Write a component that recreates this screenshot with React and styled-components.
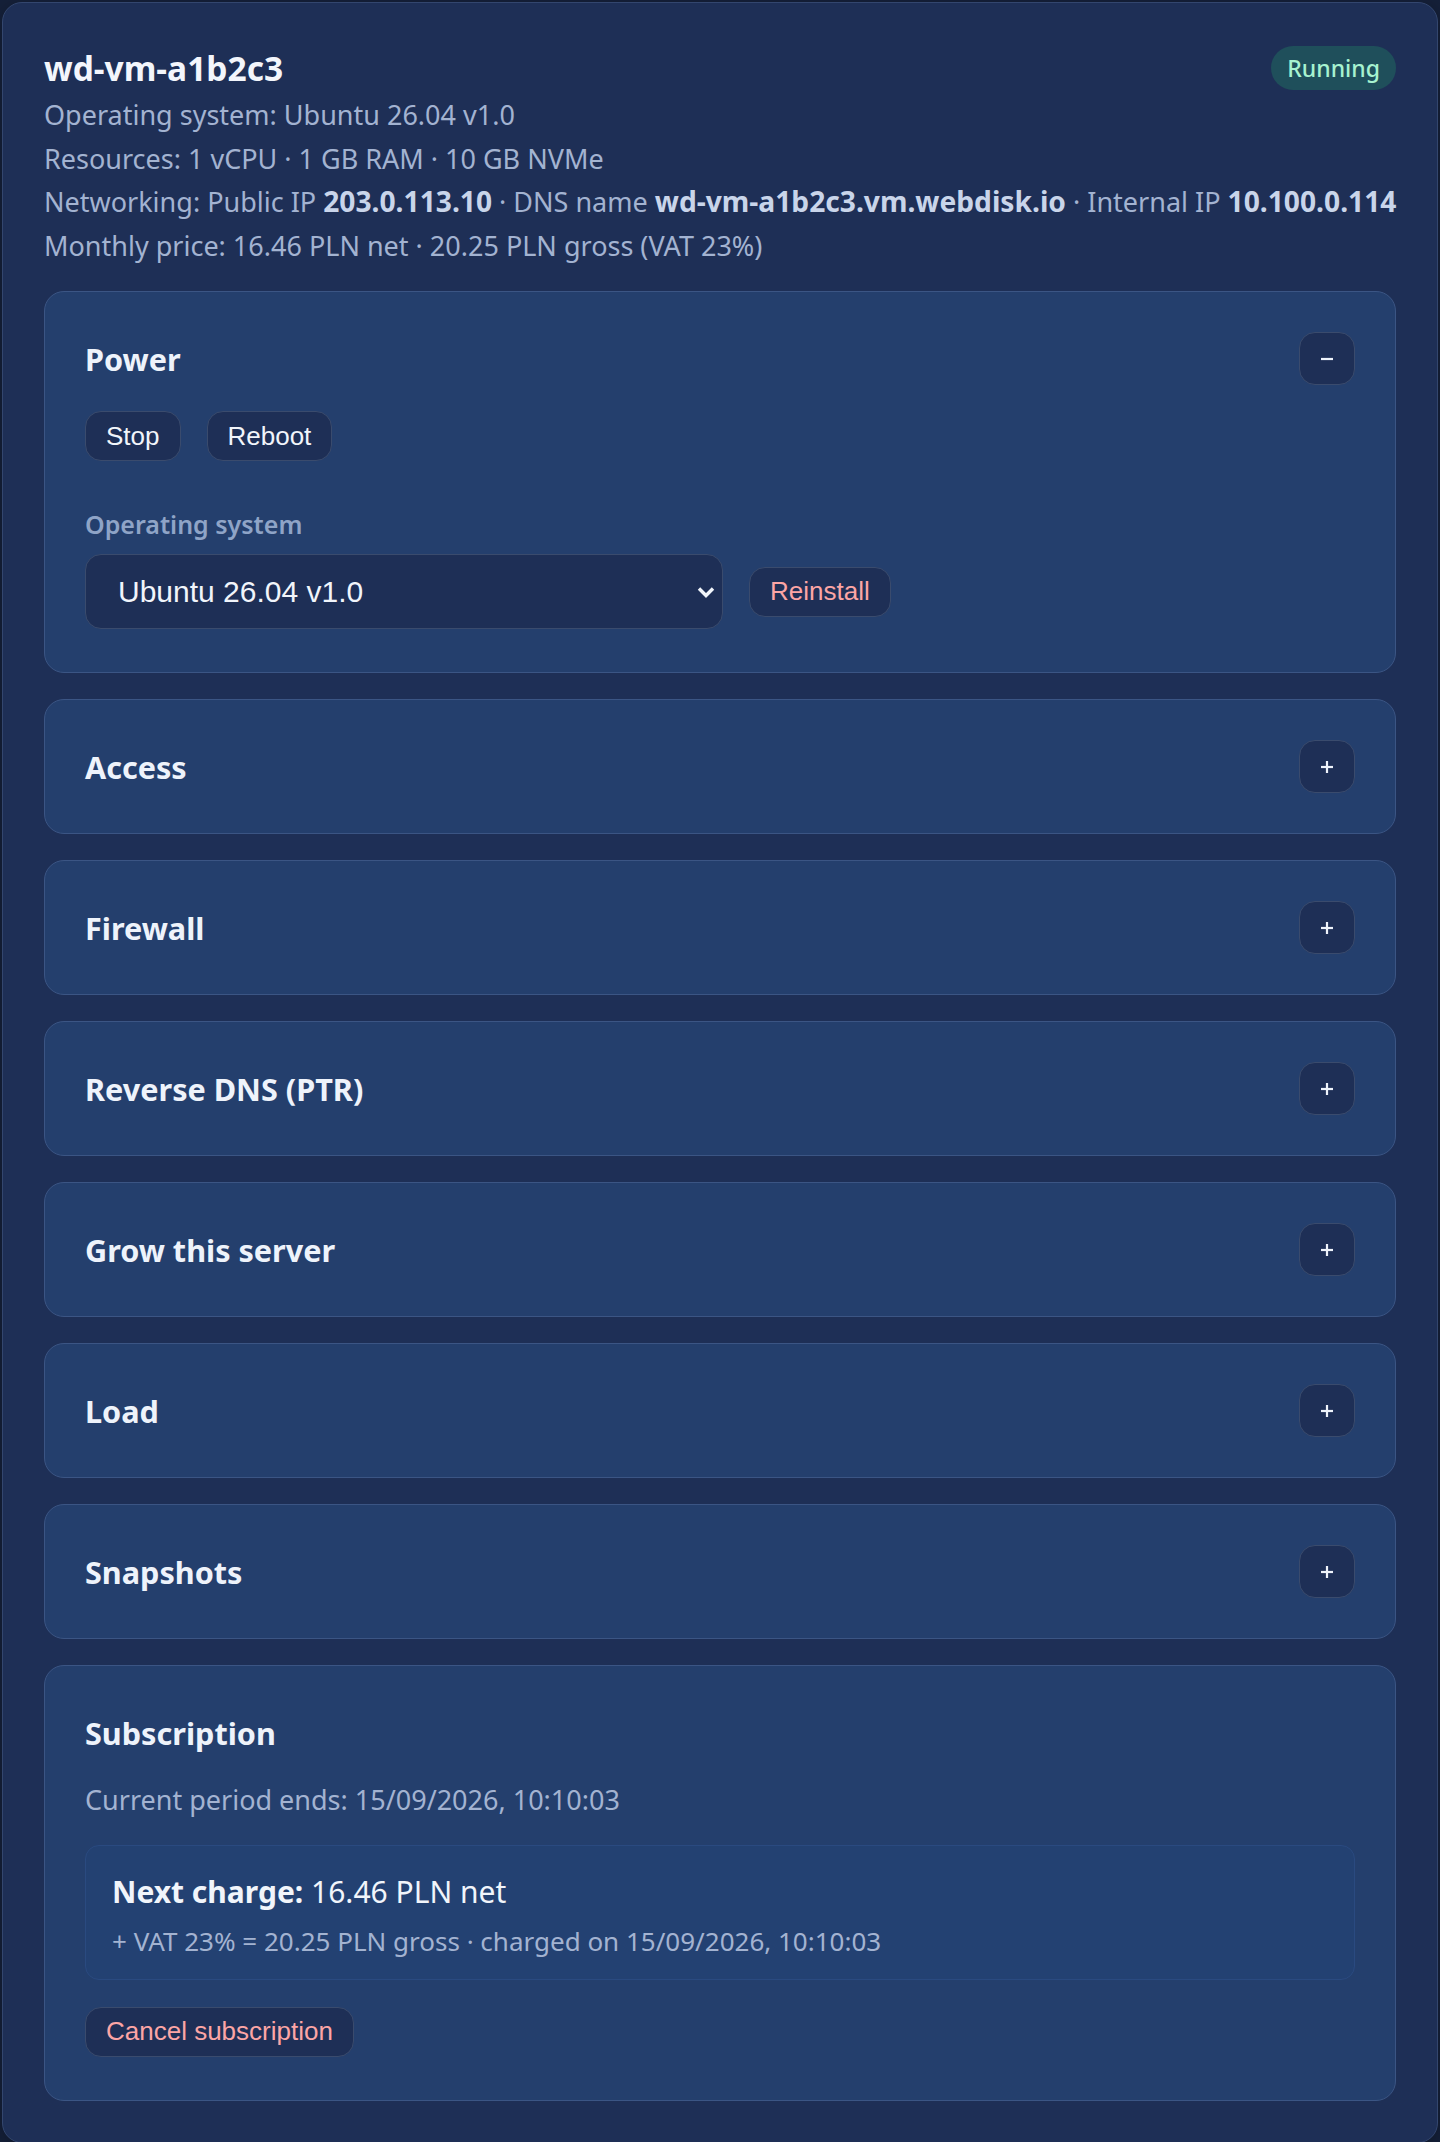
import React, { useState } from "react";
import styled, { createGlobalStyle } from "styled-components";

const GlobalStyle = createGlobalStyle`
  * { box-sizing: border-box; }
  body {
    margin: 0;
    padding: 2px;
    background: #152039;
    font-family: "Noto Sans", "Open Sans", sans-serif;
    color: #f1f5fb;
  }
`;

const Panel = styled.div`
  background: #1e2f56;
  border: 1px solid #33466e;
  border-radius: 20px;
  padding: 43px 41px 41px;
  box-shadow: 0 4px 18px rgba(0, 0, 0, 0.25);
`;

const Header = styled.div`
  display: flex;
  align-items: center;
  justify-content: space-between;
  height: 44px;
`;

const Title = styled.h2`
  margin: 0;
  font-size: 33.5px;
  line-height: 42px;
  font-weight: 700;
  color: #f3f6fc;
`;

const Badge = styled.span`
  display: inline-flex;
  align-items: center;
  height: 44px;
  padding: 0 16px;
  border-radius: 22px;
  background: #1f4f5b;
  color: #a7f3d0;
  font-size: 23px;
  font-weight: 500;
`;

const Meta = styled.div`
  margin-top: 3px;
`;

const MetaLine = styled.p`
  margin: 0;
  font-size: 27px;
  line-height: 43.5px;
  color: #a3b3d1;
  white-space: nowrap;

  b {
    font-size: 28.2px;
    font-weight: 700;
    color: #c9d5ea;
  }
`;

const Sections = styled.div`
  display: flex;
  flex-direction: column;
  gap: 26px;
  margin-top: 24px;
`;

const Card = styled.section`
  background: #243f6d;
  border: 1px solid #3b5584;
  border-radius: 20px;
  padding: 40px 40px ${(p) => (p.$tall ? "43px" : "40px")};
`;

const CardHead = styled.div`
  display: flex;
  align-items: center;
  justify-content: space-between;
  min-height: 53px;
`;

const CardTitle = styled.h3`
  margin: 0;
  font-size: 30.6px;
  font-weight: 700;
  color: #eef3fb;
`;

const Toggle = styled.button`
  display: flex;
  align-items: center;
  justify-content: center;
  width: 56px;
  height: 53px;
  padding: 0;
  border-radius: 16px;
  border: 1.5px solid #3a4b6d;
  background: #1e2f56;
  color: #eef3fb;
  cursor: pointer;
`;

const Button = styled.button`
  height: 50px;
  padding: 0 20px;
  border-radius: 16px;
  border: 1.5px solid #3a4b6d;
  background: #1e2f56;
  color: ${(p) => (p.$danger ? "#fca5a5" : "#f1f5fb")};
  font-family: "Liberation Sans", Arial, sans-serif;
  font-size: 26px;
  cursor: pointer;
`;

const Actions = styled.div`
  display: flex;
  gap: 26px;
  margin-top: ${(p) => (p.$tight ? "27px" : "26px")};
`;

const Label = styled.label`
  display: block;
  margin-top: 46px;
  font-size: 25px;
  line-height: 34px;
  font-weight: 600;
  color: #8fa4c7;
`;

const OsRow = styled.div`
  display: flex;
  align-items: center;
  gap: 26px;
  margin-top: 13px;
`;

const SelectWrap = styled.div`
  position: relative;
  width: 638px;
`;

const Select = styled.select`
  appearance: none;
  width: 100%;
  height: 75px;
  padding: 0 50px 0 32px;
  border-radius: 16px;
  border: 1.5px solid #3a4b6d;
  background: #1e2f56;
  color: #f1f5fb;
  font-family: "Liberation Sans", Arial, sans-serif;
  font-size: 30px;
`;

const Chevron = styled.svg`
  position: absolute;
  right: 8px;
  top: 50%;
  margin-top: -6px;
  pointer-events: none;
`;

const Period = styled.p`
  margin: 19px 0 0;
  font-size: 27px;
  line-height: 43.5px;
  color: #a3b3d1;
`;

const ChargeBox = styled.div`
  margin-top: 23px;
  padding: 26px 26px 20px;
  border: 1px solid #2a4a80;
  border-radius: 14px;
  background: #234172;
`;

const ChargeLine = styled.div`
  font-size: 30px;
  line-height: 40px;
  color: #f1f5fb;

  b {
    font-weight: 700;
  }
`;

const ChargeNote = styled.div`
  margin-top: 11px;
  font-size: 26px;
  line-height: 36px;
  color: #a3b3d1;
`;

const Icon = ({ open }) => (
  <svg width="14" height="14" viewBox="0 0 14 14">
    <path d="M1 7h12" stroke="currentColor" strokeWidth="2.2" />
    {!open && <path d="M7 1v12" stroke="currentColor" strokeWidth="2.2" />}
  </svg>
);

const collapsed = ["Access", "Firewall", "Reverse DNS (PTR)", "Grow this server", "Load", "Snapshots"];

export default function App() {
  const [os, setOs] = useState("ubuntu-26.04");

  return (
    <>
      <GlobalStyle />
      <Panel>
        <Header>
          <Title>wd-vm-a1b2c3</Title>
          <Badge>Running</Badge>
        </Header>

        <Meta>
          <MetaLine>Operating system: Ubuntu 26.04 v1.0</MetaLine>
          <MetaLine>Resources: 1 vCPU · 1 GB RAM · 10 GB NVMe</MetaLine>
          <MetaLine>
            Networking: Public IP <b>203.0.113.10</b> · DNS name <b>wd-vm-a1b2c3.vm.webdisk.io</b> · Internal IP{" "}
            <b>10.100.0.114</b>
          </MetaLine>
          <MetaLine>Monthly price: 16.46 PLN net · 20.25 PLN gross (VAT 23%)</MetaLine>
        </Meta>

        <Sections>
          <Card $tall>
            <CardHead>
              <CardTitle>Power</CardTitle>
              <Toggle aria-label="Collapse">
                <Icon open />
              </Toggle>
            </CardHead>
            <Actions>
              <Button>Stop</Button>
              <Button>Reboot</Button>
            </Actions>
            <Label htmlFor="os">Operating system</Label>
            <OsRow>
              <SelectWrap>
                <Select id="os" value={os} onChange={(e) => setOs(e.target.value)}>
                  <option value="ubuntu-26.04">Ubuntu 26.04 v1.0</option>
                  <option value="debian-13">Debian 13 v1.0</option>
                </Select>
                <Chevron width="18" height="12" viewBox="0 0 18 12">
                  <path d="M2 2.5l7 7 7-7" fill="none" stroke="#f1f5fb" strokeWidth="3.4" />
                </Chevron>
              </SelectWrap>
              <Button $danger>Reinstall</Button>
            </OsRow>
          </Card>

          {collapsed.map((name) => (
            <Card key={name}>
              <CardHead>
                <CardTitle>{name}</CardTitle>
                <Toggle aria-label="Expand">
                  <Icon />
                </Toggle>
              </CardHead>
            </Card>
          ))}

          <Card $tall>
            <CardHead>
              <CardTitle>Subscription</CardTitle>
            </CardHead>
            <Period>Current period ends: 15/09/2026, 10:10:03</Period>
            <ChargeBox>
              <ChargeLine>
                <b>Next charge:</b> 16.46 PLN net
              </ChargeLine>
              <ChargeNote>+ VAT 23% = 20.25 PLN gross · charged on 15/09/2026, 10:10:03</ChargeNote>
            </ChargeBox>
            <Actions $tight>
              <Button $danger>Cancel subscription</Button>
            </Actions>
          </Card>
        </Sections>
      </Panel>
    </>
  );
}
